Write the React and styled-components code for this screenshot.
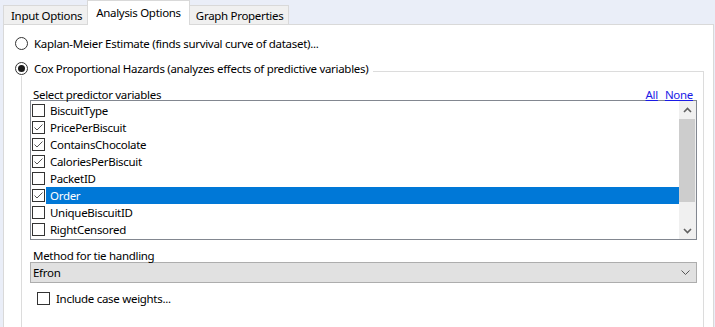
import React from "react"
import styled, { createGlobalStyle } from "styled-components"

const GlobalStyle = createGlobalStyle`
  html, body {
    margin: 0;
    padding: 0;
  }
  body {
    font-family: "Noto Sans", "Segoe UI", sans-serif;
    font-size: 11.5px;
    letter-spacing: -0.3px;
    color: #000;
    background: #eaeef8;
  }
  * {
    box-sizing: border-box;
  }
`

const variables = [
  { name: "BiscuitType", checked: false },
  { name: "PricePerBiscuit", checked: true },
  { name: "ContainsChocolate", checked: true },
  { name: "CaloriesPerBiscuit", checked: true },
  { name: "PacketID", checked: false },
  { name: "Order", checked: true, selected: true },
  { name: "UniqueBiscuitID", checked: false },
  { name: "RightCensored", checked: false },
]

const Check = ({ checked }) => (
  <CheckBox>
    {checked && (
      <svg width="11" height="11" viewBox="0 0 11 11">
        <path d="M1.5 5.5 L4 8 L9.5 2.5" fill="none" stroke="#555" strokeWidth="1" />
      </svg>
    )}
  </CheckBox>
)

const Chevron = ({ up }) => (
  <svg width="9" height="6" viewBox="0 0 9 6">
    <path
      d={up ? "M1 5 L4.5 1.5 L8 5" : "M1 1 L4.5 4.5 L8 1"}
      fill="none"
      stroke="#606060"
      strokeWidth="1.6"
    />
  </svg>
)

const App = () => {
  return (
    <Window>
      <GlobalStyle />
      <TabStrip>
        <Tab>Input Options</Tab>
        <Tab $active>Analysis Options</Tab>
        <Tab>Graph Properties</Tab>
      </TabStrip>
      <Panel>
        <RadioRow>
          <Radio />
          <span>Kaplan-Meier Estimate (finds survival curve of dataset)...</span>
        </RadioRow>
        <GroupHeader>
          <Radio $on />
          <span>Cox Proportional Hazards (analyzes effects of predictive variables)</span>
          <Rule />
        </GroupHeader>
        <GroupBody>
          <ListCaption>
            <span>Select predictor variables</span>
            <Links>
              <a>All</a>
              <a>None</a>
            </Links>
          </ListCaption>
          <ListBox>
            <Items>
              {variables.map((v) => (
                <Item key={v.name}>
                  <Check checked={v.checked} />
                  <ItemLabel $selected={v.selected}>{v.name}</ItemLabel>
                </Item>
              ))}
            </Items>
            <ScrollBar>
              <ScrollButton>
                <Chevron up />
              </ScrollButton>
              <Thumb />
              <Track />
              <ScrollButton>
                <Chevron />
              </ScrollButton>
            </ScrollBar>
          </ListBox>
          <FieldLabel>Method for tie handling</FieldLabel>
          <Select>
            <span>Efron</span>
            <svg width="9" height="5" viewBox="0 0 9 5">
              <path d="M0.5 0.5 L4.5 4.5 L8.5 0.5" fill="none" stroke="#555" strokeWidth="1" />
            </svg>
          </Select>
          <OptionRow>
            <Check />
            <span>Include case weights...</span>
          </OptionRow>
        </GroupBody>
      </Panel>
    </Window>
  )
}

const Window = styled.div`
  width: 715px;
  height: 327px;
  overflow: hidden;
  display: flex;
  flex-direction: column;
  background: #eaeef8;
`

const TabStrip = styled.div`
  display: flex;
  align-items: flex-end;
  height: 26px;
  padding-left: 3px;
  position: relative;
  z-index: 1;
`

const Tab = styled.div`
  height: ${(p) => (p.$active ? "25px" : "19px")};
  margin-bottom: ${(p) => (p.$active ? "-1px" : "0")};
  margin-left: -1px;
  padding: ${(p) => (p.$active ? "0 8px" : "0 5px 0 6px")};
  line-height: ${(p) => (p.$active ? "24px" : "19px")};
  background: ${(p) => (p.$active ? "#fff" : "#f0f0f0")};
  border: 1px solid #d9d9d9;
  border-bottom: none;
  white-space: nowrap;
  &:first-child {
    margin-left: 0;
    padding-left: 7px;
  }
`

const Panel = styled.div`
  flex: 1;
  background: #fff;
  border: 1px solid #d9d9d9;
  border-bottom: none;
  margin: 0 1px 0 3px;
  padding: 10px 9px 0 11px;
`

const RadioRow = styled.div`
  display: flex;
  align-items: center;
  gap: 6px;
  height: 16px;
  white-space: nowrap;
`

const Radio = styled.span`
  width: 13px;
  height: 13px;
  flex: none;
  border: 1px solid #333;
  border-radius: 50%;
  background: #fff;
  display: grid;
  place-items: center;
  &::after {
    content: "";
    width: 7px;
    height: 7px;
    border-radius: 50%;
    background: ${(p) => (p.$on ? "#1a1a1a" : "transparent")};
  }
`

const GroupHeader = styled(RadioRow)`
  margin-top: 9px;
`

const Rule = styled.div`
  flex: 1;
  align-self: flex-end;
  height: 5px;
  margin-left: -1px;
  border-top: 1px solid #dcdcdc;
  border-right: 1px solid #dcdcdc;
`

const GroupBody = styled.div`
  margin-left: 6px;
  height: 260px;
  border-left: 1px solid #dcdcdc;
  border-right: 1px solid #dcdcdc;
  padding: 0 6px 0 8px;
`

const ListCaption = styled.div`
  display: flex;
  justify-content: space-between;
  align-items: flex-end;
  height: 24px;
  padding: 0 4px 0 3px;
  line-height: 11px;
`

const Links = styled.div`
  display: flex;
  gap: 7px;
  a {
    color: #1a1ae6;
    text-decoration: underline;
    cursor: pointer;
  }
`

const ListBox = styled.div`
  display: flex;
  height: 140px;
  border: 1px solid #828790;
`

const Items = styled.div`
  flex: 1;
  padding: 1px 0;
`

const Item = styled.div`
  display: flex;
  align-items: center;
  height: 17px;
  padding-left: 1px;
`

const CheckBox = styled.span`
  width: 13px;
  height: 13px;
  flex: none;
  border: 1px solid #333;
  background: #fff;
  display: grid;
  place-items: center;
`

const ItemLabel = styled.span`
  flex: 1;
  height: 17px;
  line-height: 17px;
  margin-left: 1px;
  padding-left: 4px;
  background: ${(p) => (p.$selected ? "#0078d7" : "transparent")};
  color: ${(p) => (p.$selected ? "#fff" : "#000")};
`

const ScrollBar = styled.div`
  width: 17px;
  display: flex;
  flex-direction: column;
  background: #f0f0f0;
`

const ScrollButton = styled.div`
  height: 17px;
  display: grid;
  place-items: center;
`

const Thumb = styled.div`
  height: 83px;
  margin: 1px 1px 0 0;
  background: #cdcdcd;
`

const Track = styled.div`
  flex: 1;
`

const FieldLabel = styled.div`
  margin-top: 10px;
  padding-left: 3px;
  line-height: 12px;
`

const Select = styled.div`
  display: flex;
  justify-content: space-between;
  align-items: center;
  height: 21px;
  padding: 0 6px 0 2px;
  background: #e1e1e1;
  border: 1px solid #adadad;
`

const OptionRow = styled.div`
  display: flex;
  align-items: center;
  gap: 6px;
  margin-top: 8px;
  padding-left: 7px;
`

export default App
